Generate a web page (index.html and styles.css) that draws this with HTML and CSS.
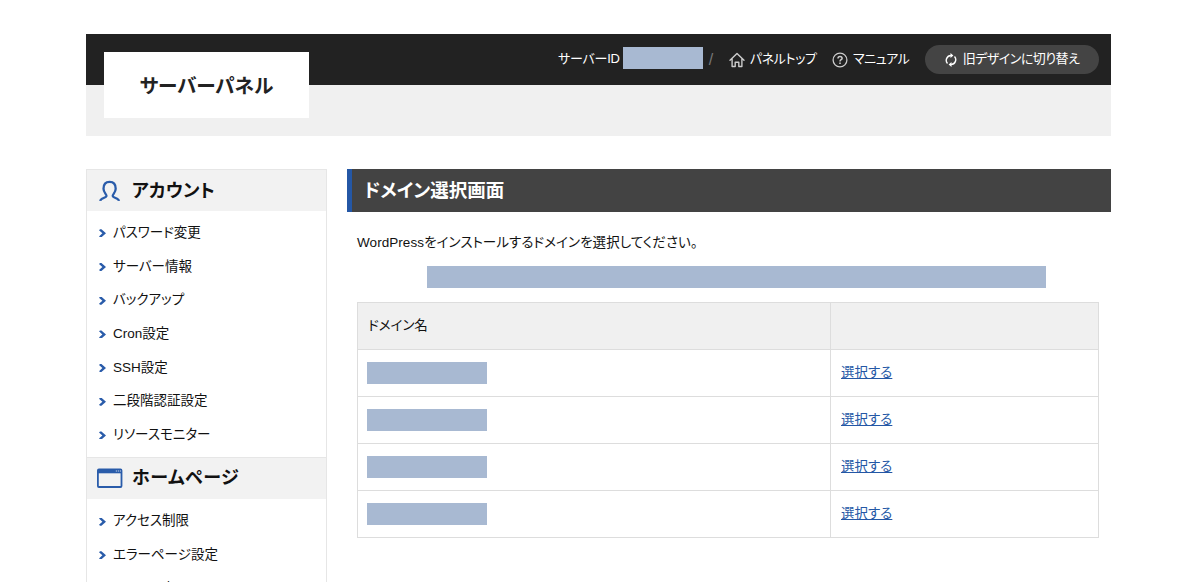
FILE: index.html
```
<!DOCTYPE html>
<html lang="ja">
<head>
    <meta charset="UTF-8">
    <meta name="viewport" content="width=device-width, initial-scale=1.0">
    <title>サーバーパネル</title>
    <link rel="stylesheet" href="styles.css">
</head>
<body>
    <div class="container">
        <header class="header">
            <div class="logo">サーバーパネル</div>
            <div class="header-nav">
                <span class="server-id">サーバーID</span>
                <span class="mask mask-id"></span>
                <span class="slash">/</span>
                <a class="nav-link nav-top" href="#">
                    <svg width="16" height="16" viewBox="0 0 16 16" fill="none" stroke="#ccc" stroke-width="1.4" stroke-linejoin="round" stroke-linecap="round">
                        <path d="M1 8.3 8 1.5l7 6.8M3.1 6.8v7.7h3.1v-4.2h3.6v4.2h3.1V6.8"/>
                    </svg>
                    <span class="label">パネルトップ</span>
                </a>
                <a class="nav-link nav-manual" href="#">
                    <svg width="16" height="16" viewBox="0 0 16 16" fill="none" stroke="#ccc" stroke-width="1.3">
                        <circle cx="8" cy="8" r="6.9"/>
                        <path d="M6 6.5C6 5.2 6.8 4.6 8 4.6s2.1.7 2.1 1.8C10.1 7.7 8 7.8 8 9.4" stroke-width="1.5"/>
                        <path d="M8 10.4v1.5" stroke-width="1.6"/>
                    </svg>
                    <span class="label">マニュアル</span>
                </a>
                <a class="switch-btn" href="#">
                    <svg width="12" height="16" viewBox="0 0 12 16" fill="none" stroke="#fff" stroke-width="1.4">
                        <path d="M2.5 11.5A4.8 4.8 0 0 1 6 3.5M9.5 4.5A4.8 4.8 0 0 1 6 12.5"/>
                        <path d="M5.5.9v5.2l2.9-2.6zM6.5 9.9v5.2l-2.9-2.6z" fill="#fff" stroke="none"/>
                    </svg>
                    <span class="label">旧デザインに切り替え</span>
                </a>
            </div>
        </header>

        <div class="content">
            <aside class="sidebar">
                <h2 class="menu-title">
                    <svg class="menu-icon" width="26" height="24" viewBox="0 0 26 24" fill="none" stroke="#2a5caa" stroke-width="2.3">
                        <path d="M3.2 21.9c.5-3 5.8-2.7 6.3-5 .3-1.4-3-3.3-3-7.1C6.5 5.3 8.9 2.9 12.6 2.9s6.1 2.4 6.1 6.9c0 3.8-3.3 5.7-3 7.1.5 2.3 5.8 2 6.3 5"/>
                    </svg>
                    <span class="title-text">アカウント</span>
                </h2>
                <ul class="menu">
                    <li><a href="#">パスワード変更</a></li>
                    <li><a href="#">サーバー情報</a></li>
                    <li><a href="#">バックアップ</a></li>
                    <li><a href="#">Cron設定</a></li>
                    <li><a href="#">SSH設定</a></li>
                    <li><a href="#">二段階認証設定</a></li>
                    <li><a href="#">リソースモニター</a></li>
                </ul>
                <h2 class="menu-title">
                    <svg class="menu-icon" width="26" height="24" viewBox="0 0 26 24" fill="none" stroke="#2a5caa" stroke-width="1.8">
                        <rect x=".9" y="3.4" width="23.6" height="17.6" rx="1"/>
                        <path d="M1 5.2h24" stroke-width="4.2"/>
                        <path d="M18.8 5h1.2M20.8 5h1.2M22.8 5h1.2" stroke="#c3d2e8" stroke-width="1.2"/>
                    </svg>
                    <span class="title-text title-home">ホームページ</span>
                </h2>
                <ul class="menu menu-home">
                    <li><a href="#">アクセス制限</a></li>
                    <li><a href="#">エラーページ設定</a></li>
                    <li><a href="#">MIME設定</a></li>
                </ul>
            </aside>

            <main class="main">
                <h1 class="page-title">ドメイン選択画面</h1>
                <p class="lead">WordPressをインストールするドメインを選択してください。</p>
                <div class="mask mask-note"></div>
                <table class="domain-table">
                    <thead>
                        <tr><th>ドメイン名</th><th></th></tr>
                    </thead>
                    <tbody>
                        <tr><td><span class="mask mask-domain"></span></td><td><a href="#">選択する</a></td></tr>
                        <tr><td><span class="mask mask-domain"></span></td><td><a href="#">選択する</a></td></tr>
                        <tr><td><span class="mask mask-domain"></span></td><td><a href="#">選択する</a></td></tr>
                        <tr><td><span class="mask mask-domain"></span></td><td><a href="#">選択する</a></td></tr>
                    </tbody>
                </table>
            </main>
        </div>
    </div>
</body>
</html>
```
FILE: styles.css
```
* {
    box-sizing: border-box;
}

html {
    overflow: hidden;
}

body {
    margin: 0;
    height: 582px;
    overflow: hidden;
    background: #fff;
    color: #111;
    font-family: "Liberation Sans", "Noto Sans CJK JP", sans-serif;
    font-size: 13.5px;
    font-feature-settings: "palt";
    line-height: 20px;
}

a {
    color: inherit;
    text-decoration: none;
}

.container {
    width: 1025px;
    height: 548px;
    margin: 34px 0 0 86px;
    overflow: hidden;
}

.header {
    position: relative;
    height: 102px;
    background: linear-gradient(#222 51px, #f0f0f0 51px);
}

/* white plate over both header bands */
.logo {
    position: absolute;
    top: 18px;
    left: 18px;
    width: 205px;
    height: 66px;
    background: #fff;
    color: #222;
    font-family: "Noto Sans CJK JP", sans-serif;
    font-size: 19.6px;
    font-weight: 700;
    line-height: 66px;
    text-align: center;
}

.header-nav {
    display: flex;
    justify-content: flex-end;
    align-items: center;
    height: 51px;
    padding-right: 12px;
    color: #fff;
    font-size: 13px;
    white-space: nowrap;
}

.server-id,
.label {
    padding-bottom: 2px;
}

.server-id {
    letter-spacing: -0.2px;
}

.mask {
    display: block;
    height: 22px;
    background: #a8b9d2;
}

.mask-id {
    width: 80px;
    margin: 0 6px 3px 3px;
}

.slash {
    width: 8px;
    margin-right: 12px;
    color: #777;
    font-size: 16px;
}

.nav-link {
    display: flex;
    align-items: center;
    gap: 5px;
    margin-right: 15.5px;
}

.nav-link .label {
    letter-spacing: -0.4px;
}

.switch-btn {
    display: flex;
    align-items: center;
    justify-content: center;
    gap: 6px;
    width: 174px;
    height: 29px;
    border-radius: 15px;
    background: #444;
}

.switch-btn .label {
    letter-spacing: -0.5px;
}

.content {
    display: flex;
    gap: 20px;
    margin-top: 33px;
}

.sidebar {
    width: 241px;
    border: 1px solid #e6e6e6;
}

.menu-title {
    display: flex;
    align-items: center;
    gap: 9px;
    height: 41px;
    margin: 0;
    padding-left: 10px;
    background: #f2f2f2;
    font-size: 18px;
}

.title-text {
    letter-spacing: 0.2px;
}

.title-home {
    letter-spacing: 0.6px;
}

.menu + .menu-title {
    height: 42px;
    border-top: 1px solid #e6e6e6;
}

.menu {
    margin: 0;
    padding: 5px 0;
    list-style: none;
}

.menu-home {
    padding-top: 5.5px;
}

.menu a {
    display: flex;
    align-items: center;
    height: 33.7px;
    padding-left: 12px;
}

.menu a::before {
    content: "";
    width: 7px;
    height: 8px;
    margin: 1px 7px 0 0;
    background: #2a5caa;
    clip-path: polygon(0 12%, 15% 0, 35% 0, 100% 50%, 35% 100%, 15% 100%, 0 88%, 48% 50%);
}

.main {
    width: 764px;
}

.page-title {
    height: 43px;
    margin: 0;
    padding-left: 12px;
    border-left: 5px solid #2457a5;
    background: #434343;
    color: #fff;
    font-size: 18.5px;
    line-height: 43px;
}

.lead {
    margin: 21px 0 13px 10px;
    letter-spacing: 0.06px;
}

.mask-note {
    width: 619px;
    margin-left: 80px;
}

.domain-table {
    width: 742px;
    margin: 14px 0 0 10px;
    border-collapse: collapse;
    table-layout: fixed;
}

.domain-table th,
.domain-table td {
    height: 47px;
    padding: 0 10px;
    border: 1px solid #ddd;
    text-align: left;
    font-weight: 400;
}

.domain-table th {
    background: #f0f0f0;
}

.domain-table th:first-child {
    width: 473px;
}

.domain-table td:first-child {
    padding: 0 9px;
}

.domain-table a {
    color: #2457a5;
    text-decoration: underline;
}

.mask-domain {
    width: 120px;
}
```
